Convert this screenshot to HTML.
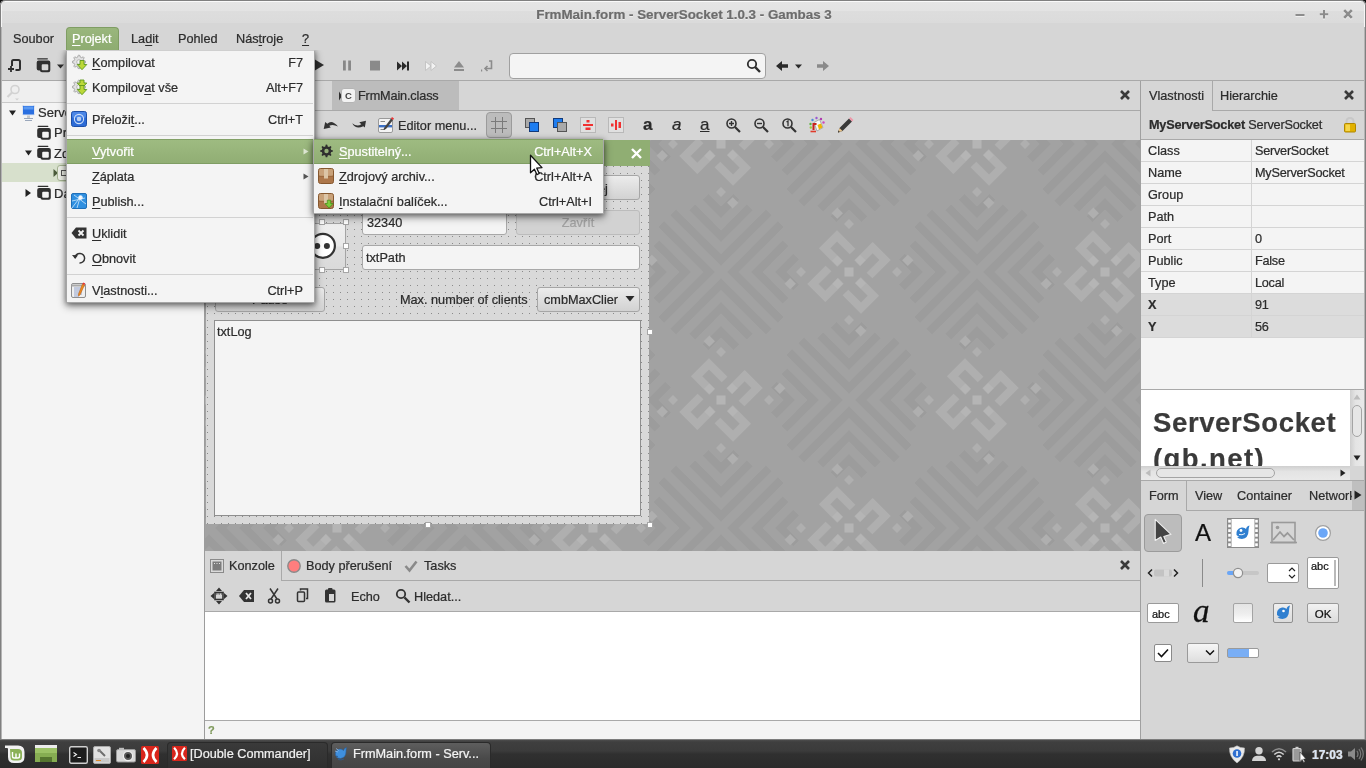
<!DOCTYPE html>
<html lang="cs"><head><meta charset="utf-8"><title>FrmMain.form - ServerSocket 1.0.3 - Gambas 3</title>
<style>
*{box-sizing:border-box;margin:0;padding:0}
html,body{width:1366px;height:768px;overflow:hidden;background:#d6d6d6}
body{position:relative;will-change:transform;font-family:"Liberation Sans",sans-serif;font-size:12.7px;color:#2c2c2c;line-height:16px;-webkit-text-stroke:.22px currentColor}
.a{position:absolute}
.t{position:absolute;white-space:nowrap;line-height:16px;height:16px;margin-top:1px}
.b{font-weight:bold}
u{text-decoration:underline;text-underline-offset:2px;text-decoration-thickness:1px}
svg{position:absolute;overflow:visible}
.ln{position:absolute;background:#a9a9a9}
.w{color:#fff}
.entry{position:absolute;background:#f4f4f4;border:1px solid #a8a8a8;border-radius:3px}
.btn{position:absolute;border:1px solid #a6a6a6;border-radius:3px;background:linear-gradient(#ececec,#dcdcdc 60%,#d2d2d2)}
.hd{position:absolute;width:6px;height:6px;background:#fff;border:1px solid #a6a6a6}
.sep{position:absolute;height:1px;background:#d2d2d2}
.mi{position:absolute;white-space:nowrap;line-height:16px;height:16px;margin-top:1px}
.sc{position:absolute;white-space:nowrap;line-height:16px;height:16px;text-align:right;margin-top:1px}
</style></head><body>
<!-- window frame -->
<div class="a" style="left:0;top:0;width:1366px;height:740px;background:#d6d6d6"></div>
<div class="a" style="left:0;top:0;width:1366px;height:27px;background:linear-gradient(#808080 0,#808080 1px,#fafafa 1px,#fafafa 2px,#e5e5e5 2px,#e3e3e3 11px,#dddddd 11px,#dbdbdb 23px,#d6d6d6 23px)"></div><div class="a" style="left:1px;top:4px;width:1px;height:23px;background:#f6f6f6"></div><div class="a" style="left:1364px;top:4px;width:1px;height:23px;background:#f6f6f6"></div>
<!-- corners -->
<svg style="left:0;top:0" width="6" height="6"><path d="M0 0H5A5 5 0 0 0 0 5Z" fill="#111"/><path d="M.5 5.500A5 5 0 0 1 5.500 .5" fill="none" stroke="#808080"/></svg>
<svg style="left:1360px;top:0" width="6" height="6"><path d="M6 0H1A5 5 0 0 1 6 5Z" fill="#111"/><path d="M5.500 5.500A5 5 0 0 0 .5 .5" fill="none" stroke="#808080"/></svg>
<div class="a" style="left:0;top:5px;width:1px;height:735px;background:#808080"></div><div class="a" style="left:1px;top:27px;width:1px;height:713px;background:#b4b4b4"></div>
<div class="a" style="left:1365px;top:5px;width:1px;height:735px;background:#808080"></div><div class="a" style="left:1364px;top:27px;width:1px;height:713px;background:#b4b4b4"></div>
<div class="t b" id="title" style="left:384px;width:600px;text-align:center;top:6px;color:#6c6c6c;font-size:13.36px;text-shadow:0 1px 0 rgba(255,255,255,.5)">FrmMain.form - ServerSocket 1.0.3 - Gambas 3</div>
<!-- window buttons -->
<svg style="left:1290px;top:5px" width="66" height="20" fill="none" stroke-width="2"><g stroke="#f0f0f0" transform="translate(0,1)"><path d="M5.500 10H14.500"/><path d="M29.800 9.200H38.200M34 5V13.400"/><path d="M54.200 5.200L61.800 12.800M61.800 5.200L54.200 12.800" stroke-width="2.600"/></g><g stroke="#8c8c8c"><path d="M5.500 10H14.500"/><path d="M29.800 9.200H38.200M34 5V13.400"/><path d="M54.200 5.200L61.800 12.800M61.800 5.200L54.200 12.800" stroke-width="2.600"/></g></svg>

<!-- menubar -->
<div class="t" style="left:13px;top:30px">Soubor</div>
<div class="a" style="left:66px;top:27px;width:53px;height:24px;background:linear-gradient(#9ab77d,#8dab70);border:1px solid #7f9d63;border-bottom:0;border-radius:4px 4px 0 0"></div>
<div class="t w" style="left:72px;top:30px"><u>P</u>rojekt</div>
<div class="t" style="left:131px;top:30px">La<u>d</u>it</div>
<div class="t" style="left:178px;top:30px">Pohled</div>
<div class="t" style="left:236px;top:30px">Nás<u>t</u>roje</div>
<div class="t" style="left:302px;top:30px"><u>?</u></div>

<!-- toolbar line -->
<div class="ln" style="left:2px;top:80px;width:1362px;height:1px"></div>

<!-- left panel -->
<div class="a" style="left:2px;top:81px;width:202px;height:659px;background:#f4f4f4"></div>
<div class="a" style="left:2px;top:81px;width:203px;height:21px;background:#efefef"></div>
<div class="ln" style="left:2px;top:102px;width:203px;height:1px;background:#c9c9c9"></div>
<div class="ln" style="left:204px;top:81px;width:1px;height:659px;background:#9c9c9c"></div>
<div class="a" style="left:2px;top:163px;width:203px;height:19px;background:#d7e0cc"></div>

<!-- center tab bar -->
<div class="a" style="left:332px;top:81px;width:127px;height:29px;background:#bcbcbc"></div>
<div class="ln" style="left:205px;top:110px;width:935px;height:1px"></div>
<!-- center form area bg placeholder -->
<div class="a" id="pat" style="left:205px;top:140px;width:935px;height:411px;background:#a2a2a2;overflow:hidden">
<svg style="left:0;top:0" width="935" height="411"><pattern id="bgp" width="256" height="256" patternUnits="userSpaceOnUse" patternTransform="translate(4,4)"><g transform="translate(128,0)"><path transform="rotate(45)" d="M-4.4 -4.4V-76H-12.5V-12.5H-76V-4.4Z" fill="#9c9c9c"/><path transform="rotate(45)" d="M-21.3 -21.3V-66H-29.4V-29.4H-66V-21.3Z" fill="#9c9c9c"/><path transform="rotate(45)" d="M-38.2 -38.2V-64H-46.3V-46.3H-64V-38.2Z" fill="#9c9c9c"/><path transform="rotate(135)" d="M-4.4 -4.4V-76H-12.5V-12.5H-76V-4.4Z" fill="#9c9c9c"/><path transform="rotate(135)" d="M-21.3 -21.3V-66H-29.4V-29.4H-66V-21.3Z" fill="#9c9c9c"/><path transform="rotate(135)" d="M-38.2 -38.2V-64H-46.3V-46.3H-64V-38.2Z" fill="#9c9c9c"/><path transform="rotate(225)" d="M-4.4 -4.4V-76H-12.5V-12.5H-76V-4.4Z" fill="#9c9c9c"/><path transform="rotate(225)" d="M-21.3 -21.3V-66H-29.4V-29.4H-66V-21.3Z" fill="#9c9c9c"/><path transform="rotate(225)" d="M-38.2 -38.2V-64H-46.3V-46.3H-64V-38.2Z" fill="#9c9c9c"/><path transform="rotate(315)" d="M-4.4 -4.4V-76H-12.5V-12.5H-76V-4.4Z" fill="#9c9c9c"/><path transform="rotate(315)" d="M-21.3 -21.3V-66H-29.4V-29.4H-66V-21.3Z" fill="#9c9c9c"/><path transform="rotate(315)" d="M-38.2 -38.2V-64H-46.3V-46.3H-64V-38.2Z" fill="#9c9c9c"/></g><g transform="translate(128,256)"><path transform="rotate(45)" d="M-4.4 -4.4V-76H-12.5V-12.5H-76V-4.4Z" fill="#9c9c9c"/><path transform="rotate(45)" d="M-21.3 -21.3V-66H-29.4V-29.4H-66V-21.3Z" fill="#9c9c9c"/><path transform="rotate(45)" d="M-38.2 -38.2V-64H-46.3V-46.3H-64V-38.2Z" fill="#9c9c9c"/><path transform="rotate(135)" d="M-4.4 -4.4V-76H-12.5V-12.5H-76V-4.4Z" fill="#9c9c9c"/><path transform="rotate(135)" d="M-21.3 -21.3V-66H-29.4V-29.4H-66V-21.3Z" fill="#9c9c9c"/><path transform="rotate(135)" d="M-38.2 -38.2V-64H-46.3V-46.3H-64V-38.2Z" fill="#9c9c9c"/><path transform="rotate(225)" d="M-4.4 -4.4V-76H-12.5V-12.5H-76V-4.4Z" fill="#9c9c9c"/><path transform="rotate(225)" d="M-21.3 -21.3V-66H-29.4V-29.4H-66V-21.3Z" fill="#9c9c9c"/><path transform="rotate(225)" d="M-38.2 -38.2V-64H-46.3V-46.3H-64V-38.2Z" fill="#9c9c9c"/><path transform="rotate(315)" d="M-4.4 -4.4V-76H-12.5V-12.5H-76V-4.4Z" fill="#9c9c9c"/><path transform="rotate(315)" d="M-21.3 -21.3V-66H-29.4V-29.4H-66V-21.3Z" fill="#9c9c9c"/><path transform="rotate(315)" d="M-38.2 -38.2V-64H-46.3V-46.3H-64V-38.2Z" fill="#9c9c9c"/></g><g transform="translate(0,128)"><path transform="rotate(45)" d="M-4.4 -4.4V-76H-12.5V-12.5H-76V-4.4Z" fill="#9c9c9c"/><path transform="rotate(45)" d="M-21.3 -21.3V-66H-29.4V-29.4H-66V-21.3Z" fill="#9c9c9c"/><path transform="rotate(45)" d="M-38.2 -38.2V-64H-46.3V-46.3H-64V-38.2Z" fill="#9c9c9c"/><path transform="rotate(135)" d="M-4.4 -4.4V-76H-12.5V-12.5H-76V-4.4Z" fill="#9c9c9c"/><path transform="rotate(135)" d="M-21.3 -21.3V-66H-29.4V-29.4H-66V-21.3Z" fill="#9c9c9c"/><path transform="rotate(135)" d="M-38.2 -38.2V-64H-46.3V-46.3H-64V-38.2Z" fill="#9c9c9c"/><path transform="rotate(225)" d="M-4.4 -4.4V-76H-12.5V-12.5H-76V-4.4Z" fill="#9c9c9c"/><path transform="rotate(225)" d="M-21.3 -21.3V-66H-29.4V-29.4H-66V-21.3Z" fill="#9c9c9c"/><path transform="rotate(225)" d="M-38.2 -38.2V-64H-46.3V-46.3H-64V-38.2Z" fill="#9c9c9c"/><path transform="rotate(315)" d="M-4.4 -4.4V-76H-12.5V-12.5H-76V-4.4Z" fill="#9c9c9c"/><path transform="rotate(315)" d="M-21.3 -21.3V-66H-29.4V-29.4H-66V-21.3Z" fill="#9c9c9c"/><path transform="rotate(315)" d="M-38.2 -38.2V-64H-46.3V-46.3H-64V-38.2Z" fill="#9c9c9c"/></g><g transform="translate(256,128)"><path transform="rotate(45)" d="M-4.4 -4.4V-76H-12.5V-12.5H-76V-4.4Z" fill="#9c9c9c"/><path transform="rotate(45)" d="M-21.3 -21.3V-66H-29.4V-29.4H-66V-21.3Z" fill="#9c9c9c"/><path transform="rotate(45)" d="M-38.2 -38.2V-64H-46.3V-46.3H-64V-38.2Z" fill="#9c9c9c"/><path transform="rotate(135)" d="M-4.4 -4.4V-76H-12.5V-12.5H-76V-4.4Z" fill="#9c9c9c"/><path transform="rotate(135)" d="M-21.3 -21.3V-66H-29.4V-29.4H-66V-21.3Z" fill="#9c9c9c"/><path transform="rotate(135)" d="M-38.2 -38.2V-64H-46.3V-46.3H-64V-38.2Z" fill="#9c9c9c"/><path transform="rotate(225)" d="M-4.4 -4.4V-76H-12.5V-12.5H-76V-4.4Z" fill="#9c9c9c"/><path transform="rotate(225)" d="M-21.3 -21.3V-66H-29.4V-29.4H-66V-21.3Z" fill="#9c9c9c"/><path transform="rotate(225)" d="M-38.2 -38.2V-64H-46.3V-46.3H-64V-38.2Z" fill="#9c9c9c"/><path transform="rotate(315)" d="M-4.4 -4.4V-76H-12.5V-12.5H-76V-4.4Z" fill="#9c9c9c"/><path transform="rotate(315)" d="M-21.3 -21.3V-66H-29.4V-29.4H-66V-21.3Z" fill="#9c9c9c"/><path transform="rotate(315)" d="M-38.2 -38.2V-64H-46.3V-46.3H-64V-38.2Z" fill="#9c9c9c"/></g><g transform="translate(0,0)"><path transform="rotate(45)" d="M-38 -21H-12V-13H-30V-3.500H-12V4.500H-38Z" fill="#afafaf"/><rect transform="rotate(45)" x="-20" y="-3.500" width="7.500" height="7.500" fill="#b5b5b5"/><rect transform="rotate(0) translate(0,-48) rotate(45)" x="-3.500" y="-3.500" width="7" height="7" fill="#afafaf"/><rect transform="rotate(0) translate(-11.700,-58.800) rotate(45)" x="-4" y="-4" width="8" height="8" fill="#afafaf"/><path transform="rotate(135)" d="M-38 -21H-12V-13H-30V-3.500H-12V4.500H-38Z" fill="#afafaf"/><rect transform="rotate(135)" x="-20" y="-3.500" width="7.500" height="7.500" fill="#b5b5b5"/><rect transform="rotate(90) translate(0,-48) rotate(45)" x="-3.500" y="-3.500" width="7" height="7" fill="#afafaf"/><rect transform="rotate(90) translate(-11.700,-58.800) rotate(45)" x="-4" y="-4" width="8" height="8" fill="#afafaf"/><path transform="rotate(225)" d="M-38 -21H-12V-13H-30V-3.500H-12V4.500H-38Z" fill="#afafaf"/><rect transform="rotate(225)" x="-20" y="-3.500" width="7.500" height="7.500" fill="#b5b5b5"/><rect transform="rotate(180) translate(0,-48) rotate(45)" x="-3.500" y="-3.500" width="7" height="7" fill="#afafaf"/><rect transform="rotate(180) translate(-11.700,-58.800) rotate(45)" x="-4" y="-4" width="8" height="8" fill="#afafaf"/><path transform="rotate(315)" d="M-38 -21H-12V-13H-30V-3.500H-12V4.500H-38Z" fill="#afafaf"/><rect transform="rotate(315)" x="-20" y="-3.500" width="7.500" height="7.500" fill="#b5b5b5"/><rect transform="rotate(270) translate(0,-48) rotate(45)" x="-3.500" y="-3.500" width="7" height="7" fill="#afafaf"/><rect transform="rotate(270) translate(-11.700,-58.800) rotate(45)" x="-4" y="-4" width="8" height="8" fill="#afafaf"/><rect x="-4.500" y="-4.500" width="9" height="9" fill="#b5b5b5"/></g><g transform="translate(256,0)"><path transform="rotate(45)" d="M-38 -21H-12V-13H-30V-3.500H-12V4.500H-38Z" fill="#afafaf"/><rect transform="rotate(45)" x="-20" y="-3.500" width="7.500" height="7.500" fill="#b5b5b5"/><rect transform="rotate(0) translate(0,-48) rotate(45)" x="-3.500" y="-3.500" width="7" height="7" fill="#afafaf"/><rect transform="rotate(0) translate(-11.700,-58.800) rotate(45)" x="-4" y="-4" width="8" height="8" fill="#afafaf"/><path transform="rotate(135)" d="M-38 -21H-12V-13H-30V-3.500H-12V4.500H-38Z" fill="#afafaf"/><rect transform="rotate(135)" x="-20" y="-3.500" width="7.500" height="7.500" fill="#b5b5b5"/><rect transform="rotate(90) translate(0,-48) rotate(45)" x="-3.500" y="-3.500" width="7" height="7" fill="#afafaf"/><rect transform="rotate(90) translate(-11.700,-58.800) rotate(45)" x="-4" y="-4" width="8" height="8" fill="#afafaf"/><path transform="rotate(225)" d="M-38 -21H-12V-13H-30V-3.500H-12V4.500H-38Z" fill="#afafaf"/><rect transform="rotate(225)" x="-20" y="-3.500" width="7.500" height="7.500" fill="#b5b5b5"/><rect transform="rotate(180) translate(0,-48) rotate(45)" x="-3.500" y="-3.500" width="7" height="7" fill="#afafaf"/><rect transform="rotate(180) translate(-11.700,-58.800) rotate(45)" x="-4" y="-4" width="8" height="8" fill="#afafaf"/><path transform="rotate(315)" d="M-38 -21H-12V-13H-30V-3.500H-12V4.500H-38Z" fill="#afafaf"/><rect transform="rotate(315)" x="-20" y="-3.500" width="7.500" height="7.500" fill="#b5b5b5"/><rect transform="rotate(270) translate(0,-48) rotate(45)" x="-3.500" y="-3.500" width="7" height="7" fill="#afafaf"/><rect transform="rotate(270) translate(-11.700,-58.800) rotate(45)" x="-4" y="-4" width="8" height="8" fill="#afafaf"/><rect x="-4.500" y="-4.500" width="9" height="9" fill="#b5b5b5"/></g><g transform="translate(0,256)"><path transform="rotate(45)" d="M-38 -21H-12V-13H-30V-3.500H-12V4.500H-38Z" fill="#afafaf"/><rect transform="rotate(45)" x="-20" y="-3.500" width="7.500" height="7.500" fill="#b5b5b5"/><rect transform="rotate(0) translate(0,-48) rotate(45)" x="-3.500" y="-3.500" width="7" height="7" fill="#afafaf"/><rect transform="rotate(0) translate(-11.700,-58.800) rotate(45)" x="-4" y="-4" width="8" height="8" fill="#afafaf"/><path transform="rotate(135)" d="M-38 -21H-12V-13H-30V-3.500H-12V4.500H-38Z" fill="#afafaf"/><rect transform="rotate(135)" x="-20" y="-3.500" width="7.500" height="7.500" fill="#b5b5b5"/><rect transform="rotate(90) translate(0,-48) rotate(45)" x="-3.500" y="-3.500" width="7" height="7" fill="#afafaf"/><rect transform="rotate(90) translate(-11.700,-58.800) rotate(45)" x="-4" y="-4" width="8" height="8" fill="#afafaf"/><path transform="rotate(225)" d="M-38 -21H-12V-13H-30V-3.500H-12V4.500H-38Z" fill="#afafaf"/><rect transform="rotate(225)" x="-20" y="-3.500" width="7.500" height="7.500" fill="#b5b5b5"/><rect transform="rotate(180) translate(0,-48) rotate(45)" x="-3.500" y="-3.500" width="7" height="7" fill="#afafaf"/><rect transform="rotate(180) translate(-11.700,-58.800) rotate(45)" x="-4" y="-4" width="8" height="8" fill="#afafaf"/><path transform="rotate(315)" d="M-38 -21H-12V-13H-30V-3.500H-12V4.500H-38Z" fill="#afafaf"/><rect transform="rotate(315)" x="-20" y="-3.500" width="7.500" height="7.500" fill="#b5b5b5"/><rect transform="rotate(270) translate(0,-48) rotate(45)" x="-3.500" y="-3.500" width="7" height="7" fill="#afafaf"/><rect transform="rotate(270) translate(-11.700,-58.800) rotate(45)" x="-4" y="-4" width="8" height="8" fill="#afafaf"/><rect x="-4.500" y="-4.500" width="9" height="9" fill="#b5b5b5"/></g><g transform="translate(256,256)"><path transform="rotate(45)" d="M-38 -21H-12V-13H-30V-3.500H-12V4.500H-38Z" fill="#afafaf"/><rect transform="rotate(45)" x="-20" y="-3.500" width="7.500" height="7.500" fill="#b5b5b5"/><rect transform="rotate(0) translate(0,-48) rotate(45)" x="-3.500" y="-3.500" width="7" height="7" fill="#afafaf"/><rect transform="rotate(0) translate(-11.700,-58.800) rotate(45)" x="-4" y="-4" width="8" height="8" fill="#afafaf"/><path transform="rotate(135)" d="M-38 -21H-12V-13H-30V-3.500H-12V4.500H-38Z" fill="#afafaf"/><rect transform="rotate(135)" x="-20" y="-3.500" width="7.500" height="7.500" fill="#b5b5b5"/><rect transform="rotate(90) translate(0,-48) rotate(45)" x="-3.500" y="-3.500" width="7" height="7" fill="#afafaf"/><rect transform="rotate(90) translate(-11.700,-58.800) rotate(45)" x="-4" y="-4" width="8" height="8" fill="#afafaf"/><path transform="rotate(225)" d="M-38 -21H-12V-13H-30V-3.500H-12V4.500H-38Z" fill="#afafaf"/><rect transform="rotate(225)" x="-20" y="-3.500" width="7.500" height="7.500" fill="#b5b5b5"/><rect transform="rotate(180) translate(0,-48) rotate(45)" x="-3.500" y="-3.500" width="7" height="7" fill="#afafaf"/><rect transform="rotate(180) translate(-11.700,-58.800) rotate(45)" x="-4" y="-4" width="8" height="8" fill="#afafaf"/><path transform="rotate(315)" d="M-38 -21H-12V-13H-30V-3.500H-12V4.500H-38Z" fill="#afafaf"/><rect transform="rotate(315)" x="-20" y="-3.500" width="7.500" height="7.500" fill="#b5b5b5"/><rect transform="rotate(270) translate(0,-48) rotate(45)" x="-3.500" y="-3.500" width="7" height="7" fill="#afafaf"/><rect transform="rotate(270) translate(-11.700,-58.800) rotate(45)" x="-4" y="-4" width="8" height="8" fill="#afafaf"/><rect x="-4.500" y="-4.500" width="9" height="9" fill="#b5b5b5"/></g><g transform="translate(128,128)"><path transform="rotate(45)" d="M-38 -21H-12V-13H-30V-3.500H-12V4.500H-38Z" fill="#afafaf"/><rect transform="rotate(45)" x="-20" y="-3.500" width="7.500" height="7.500" fill="#b5b5b5"/><rect transform="rotate(0) translate(0,-48) rotate(45)" x="-3.500" y="-3.500" width="7" height="7" fill="#afafaf"/><rect transform="rotate(0) translate(-11.700,-58.800) rotate(45)" x="-4" y="-4" width="8" height="8" fill="#afafaf"/><path transform="rotate(135)" d="M-38 -21H-12V-13H-30V-3.500H-12V4.500H-38Z" fill="#afafaf"/><rect transform="rotate(135)" x="-20" y="-3.500" width="7.500" height="7.500" fill="#b5b5b5"/><rect transform="rotate(90) translate(0,-48) rotate(45)" x="-3.500" y="-3.500" width="7" height="7" fill="#afafaf"/><rect transform="rotate(90) translate(-11.700,-58.800) rotate(45)" x="-4" y="-4" width="8" height="8" fill="#afafaf"/><path transform="rotate(225)" d="M-38 -21H-12V-13H-30V-3.500H-12V4.500H-38Z" fill="#afafaf"/><rect transform="rotate(225)" x="-20" y="-3.500" width="7.500" height="7.500" fill="#b5b5b5"/><rect transform="rotate(180) translate(0,-48) rotate(45)" x="-3.500" y="-3.500" width="7" height="7" fill="#afafaf"/><rect transform="rotate(180) translate(-11.700,-58.800) rotate(45)" x="-4" y="-4" width="8" height="8" fill="#afafaf"/><path transform="rotate(315)" d="M-38 -21H-12V-13H-30V-3.500H-12V4.500H-38Z" fill="#afafaf"/><rect transform="rotate(315)" x="-20" y="-3.500" width="7.500" height="7.500" fill="#b5b5b5"/><rect transform="rotate(270) translate(0,-48) rotate(45)" x="-3.500" y="-3.500" width="7" height="7" fill="#afafaf"/><rect transform="rotate(270) translate(-11.700,-58.800) rotate(45)" x="-4" y="-4" width="8" height="8" fill="#afafaf"/><rect x="-4.500" y="-4.500" width="9" height="9" fill="#b5b5b5"/></g></pattern><rect width="935" height="411" fill="url(#bgp)"/></svg>
</div>

<!-- right panel -->
<div class="ln" style="left:1140px;top:81px;width:1px;height:659px;background:#a0a0a0"></div>
<!-- main toolbar -->
<svg style="left:7px;top:58px" width="16" height="16" fill="none" stroke="#2e2e2e" stroke-width="2"><path d="M5 8V3.500Q5 2 6.500 2H11.500Q13 2 13 3.500V10.500Q13 12 11.500 12H8.500"/><path d="M1 11H7M4 8V14" stroke-width="1.800"/></svg>
<svg style="left:36px;top:58px" width="30" height="16"><g transform="translate(.5,-.5)"><path d="M1.200 1.300H10.800" fill="none" stroke="#2e2e2e" stroke-width="1.300" stroke-linecap="round"/><path fill-rule="evenodd" fill="#303030" d="M2.200 3H11.800Q13.800 3 13.800 5V12.700Q13.800 14.700 11.800 14.700H5.500Q3.500 14.700 3.500 13H2.200Q.2 13 .2 11V5Q.2 3 2.200 3ZM6.200 6.700H10.800Q11.800 6.700 11.800 7.700V11.700Q11.800 12.700 10.800 12.700H6.200Q5.200 12.700 5.200 11.700V7.700Q5.200 6.700 6.200 6.700Z"/></g><path d="M21 6.500H28L24.500 10.500Z" fill="#2e2e2e"/></svg>
<svg style="left:312px;top:58px" width="14" height="14"><path d="M2 1V13L12 7Z" fill="#2e2e2e"/></svg>
<svg style="left:341px;top:59px" width="12" height="13"><rect x="2" y="1.500" width="2.800" height="10" fill="#888"/><rect x="7.200" y="1.500" width="2.800" height="10" fill="#888"/></svg>
<svg style="left:369px;top:59px" width="12" height="13"><rect x="1" y="1.700" width="10" height="9.800" fill="#8a8a8a"/></svg>
<svg style="left:396px;top:60px" width="14" height="12" fill="#2a2a2a"><path d="M1 1.500L6 6L1 10.500ZM6 1.500L11 6L6 10.500Z"/><rect x="11" y="1.500" width="2" height="9"/></svg>
<svg style="left:424px;top:60px" width="14" height="12" fill="#f2f2f2" stroke="#bdbdbd" stroke-width=".8"><path d="M1.500 1.500L7 6L1.500 10.500ZM7 1.500L12.500 6L7 10.500Z"/></svg>
<svg style="left:453px;top:60px" width="12" height="12" fill="#8c8c8c"><path d="M6 1L11 7.500H1Z"/><rect x="1" y="9" width="10" height="2"/></svg>
<svg style="left:479px;top:59px" width="16" height="14" fill="none" stroke="#8c8c8c" stroke-width="1.600"><path d="M10 2H12.500V9.500H6"/><path d="M8.500 7L6 9.500L8.500 12"/><path d="M2 11.500H3.200" stroke-width="2"/></svg>
<div class="entry" style="left:509px;top:53px;width:257px;height:26px;border-color:#a0a0a0;border-radius:4px"></div>
<svg style="left:746px;top:58px" width="16" height="16" fill="none" stroke="#2e2e2e"><circle cx="6" cy="6" r="4.200" stroke-width="1.800"/><path d="M9.200 9.200L14 14" stroke-width="2.400"/></svg>
<svg style="left:775px;top:60px" width="30" height="12" fill="#2a2a2a"><path d="M1 6L7 1V4.200H13V7.800H7V11Z"/><path d="M20 4.500H27L23.500 8.500Z"/></svg>
<svg style="left:816px;top:60px" width="14" height="12" fill="#8a8a8a"><path d="M13 6L7 1V4.200H1V7.800H7V11Z"/></svg>

<!-- left search + tree -->
<svg style="left:6px;top:83px" width="16" height="18" fill="none" stroke="#d2d2d2"><circle cx="9" cy="6.500" r="4" stroke-width="1.600"/><path d="M6 9.500L1.500 14" stroke-width="2.200"/><path d="M9 15.500H13L11 17.500Z" fill="#d2d2d2" stroke="none"/></svg>
<svg style="left:9px;top:110px" width="7" height="6"><path d="M0 .5H7L3.500 5.500Z" fill="#222"/></svg>
<svg style="left:21px;top:104px" width="15" height="18"><rect x="1.500" y="1.500" width="12" height="9.500" rx="1" fill="#2a6fe0" stroke="#dfe6f2"/><rect x="2.500" y="2.500" width="10" height="3" fill="#5b9af2"/><path d="M6 11.500H9V14H6Z" fill="#c9c9c9"/><path d="M3 14.500H12M4 16.500H11" stroke="#9aa7bb"/></svg>
<div class="t" style="left:38px;top:104px;font-size:13px">Serve</div>
<svg style="left:37px;top:125px" width="15" height="16"><path d="M1.200 1.300H10.800" fill="none" stroke="#2e2e2e" stroke-width="1.300" stroke-linecap="round"/><path fill-rule="evenodd" fill="#303030" d="M2.200 3H11.800Q13.800 3 13.800 5V12.700Q13.800 14.700 11.800 14.700H5.500Q3.500 14.700 3.500 13H2.200Q.2 13 .2 11V5Q.2 3 2.200 3ZM6.200 6.700H10.800Q11.800 6.700 11.800 7.700V11.700Q11.800 12.700 10.800 12.700H6.200Q5.200 12.700 5.200 11.700V7.700Q5.200 6.700 6.200 6.700Z"/></svg>
<div class="t" style="left:54px;top:124px;font-size:13px">Pr</div>
<svg style="left:25px;top:150px" width="7" height="6"><path d="M0 .5H7L3.500 5.500Z" fill="#222"/></svg>
<svg style="left:37px;top:145px" width="15" height="16"><path d="M1.200 1.300H10.800" fill="none" stroke="#2e2e2e" stroke-width="1.300" stroke-linecap="round"/><path fill-rule="evenodd" fill="#303030" d="M2.200 3H11.800Q13.800 3 13.800 5V12.700Q13.800 14.700 11.800 14.700H5.500Q3.500 14.700 3.500 13H2.200Q.2 13 .2 11V5Q.2 3 2.200 3ZM6.200 6.700H10.800Q11.800 6.700 11.800 7.700V11.700Q11.800 12.700 10.800 12.700H6.200Q5.200 12.700 5.200 11.700V7.700Q5.200 6.700 6.200 6.700Z"/></svg>
<div class="t" style="left:54px;top:145px;font-size:13px">Zd</div>
<svg style="left:53px;top:169px" width="5" height="8"><path d="M.5 0V8L5 4Z" fill="#4a5a3a"/></svg>
<div class="a" style="left:57px;top:165px;width:14px;height:16px;background:#eceee6;border:1px solid #a5b392;border-radius:3px"></div>
<div class="a" style="left:61px;top:170px;width:8px;height:6px;border:1px solid #555"></div>
<svg style="left:25px;top:189px" width="6" height="8"><path d="M.5 0V8L6 4Z" fill="#222"/></svg>
<svg style="left:37px;top:185px" width="15" height="16"><path d="M1.200 1.300H10.800" fill="none" stroke="#2e2e2e" stroke-width="1.300" stroke-linecap="round"/><path fill-rule="evenodd" fill="#303030" d="M2.200 3H11.800Q13.800 3 13.800 5V12.700Q13.800 14.700 11.800 14.700H5.500Q3.500 14.700 3.500 13H2.200Q.2 13 .2 11V5Q.2 3 2.200 3ZM6.200 6.700H10.800Q11.800 6.700 11.800 7.700V11.700Q11.800 12.700 10.800 12.700H6.200Q5.200 12.700 5.200 11.700V7.700Q5.200 6.700 6.200 6.700Z"/></svg>
<div class="t" style="left:54px;top:185px;font-size:13px">Da</div>
<!-- center tab -->
<svg style="left:338px;top:86px" width="20" height="20"><path d="M1 5.5V14.5L4 10Z" fill="#2e2e2e"/><rect x="3.5" y="2.5" width="14" height="14" rx="2.5" fill="#f2f2f2" stroke="#b4b4b4"/><text x="10.5" y="13.2" font-family="Liberation Sans,sans-serif" font-size="9.5" font-weight="bold" fill="#444" text-anchor="middle">C</text></svg>
<div class="t" style="left:358px;top:87px;letter-spacing:-.15px">FrmMain.class</div>
<svg style="left:1119px;top:89px" width="12" height="12"><path d="M2 2L10 10M10 2L2 10" stroke="#3a3a3a" stroke-width="2.6" fill="none"/></svg>

<!-- editor toolbar -->
<svg style="left:322px;top:117px" width="48" height="16" fill="#333"><path d="M1.700 11.900L3.200 5L5.300 6.700Q10 2.300 16 9.600Q11 6.800 7.300 8.800L8.800 10.500Z"/><path d="M44 3.800L37.300 5.200L39.300 7.200Q35 10 30.200 6.200Q34 13 41.300 9.200L42.800 10.600Z"/></svg>
<svg style="left:377px;top:116px" width="18" height="18"><rect x="1.5" y="2.5" width="14" height="14" rx="1.5" fill="#f4f4f4" stroke="#9a9a9a"/><rect x="2" y="9" width="13" height="2.4" fill="#3b6fc4"/><path d="M3.5 5.5H8M3.5 13.5H8" stroke="#888"/><path d="M7 12L14 2.5L16 4L9 13L6.5 14Z" fill="#444"/><path d="M14 2.5L15 1L17 2.5L16 4Z" fill="#e33"/></svg>
<div class="t" style="left:398px;top:117px">Editor menu...</div>
<div class="a" style="left:486px;top:112px;width:26px;height:26px;background:#bcbcbc;border:1px solid #9b9b9b;border-radius:4px"></div>
<svg style="left:490px;top:116px" width="18" height="18" stroke="#7a7a7a" fill="none"><path d="M5.5 1V17M12.5 1V17M1 5.5H17M1 12.5H17"/></svg>
<svg style="left:524px;top:117px" width="16" height="16"><rect x="1.5" y="1.5" width="9" height="9" fill="#a9a9a9" stroke="#555"/><rect x="5.5" y="5.5" width="9" height="9" fill="#1e7df0" stroke="#123a7a"/></svg>
<svg style="left:552px;top:117px" width="16" height="16"><rect x="1.5" y="1.5" width="9" height="9" fill="#1e7df0" stroke="#123a7a"/><rect x="5.5" y="5.5" width="9" height="9" fill="#a9a9a9" stroke="#555"/></svg>
<svg style="left:580px;top:117px" width="16" height="16"><rect x=".5" y=".5" width="15" height="15" fill="#e0e0e0" stroke="#b9b9b9"/><path d="M3 8H13" stroke="#f03030" stroke-width="2"/><rect x="6.5" y="3" width="3" height="2.5" fill="#f03030"/><rect x="5.5" y="10.5" width="5" height="2.5" fill="#f03030"/></svg>
<svg style="left:608px;top:117px" width="16" height="16"><rect x=".5" y=".5" width="15" height="15" fill="#e0e0e0" stroke="#b9b9b9"/><path d="M8 3V13" stroke="#f03030" stroke-width="2"/><rect x="3" y="6.5" width="2.5" height="3" fill="#f03030"/><rect x="10.5" y="5" width="2.5" height="6" fill="#f03030"/></svg>
<div class="t b" style="left:643px;top:115px;font-size:17px;color:#2a2a2a;line-height:18px;height:18px">a</div>
<div class="t" style="left:672px;top:115px;font-size:17px;color:#2a2a2a;font-style:italic;line-height:18px;height:18px">a</div>
<div class="t" style="left:700px;top:115px;font-size:17px;color:#2a2a2a;line-height:18px;height:18px;text-decoration:underline">a</div>
<svg style="left:725px;top:117px" width="16" height="16" fill="none" stroke="#333"><circle cx="6.5" cy="6.5" r="4.5" stroke-width="1.6"/><path d="M10 10L15 15" stroke-width="2.2"/><path d="M4 6.5H9M6.5 4V9" stroke-width="1.4"/></svg>
<svg style="left:753px;top:117px" width="16" height="16" fill="none" stroke="#333"><circle cx="6.5" cy="6.5" r="4.5" stroke-width="1.6"/><path d="M10 10L15 15" stroke-width="2.2"/><path d="M4 6.5H9" stroke-width="1.4"/></svg>
<svg style="left:781px;top:117px" width="16" height="16" fill="none" stroke="#333"><circle cx="6.5" cy="6.5" r="4.5" stroke-width="1.6"/><path d="M10 10L15 15" stroke-width="2.2"/><path d="M5.5 5L7 4V9.2" stroke-width="1.3"/></svg>
<svg style="left:808px;top:116px" width="18" height="18"><circle cx="4.500" cy="4" r="1.200" fill="#4a8ad8"/><circle cx="8.500" cy="2" r="1.200" fill="#9a5ad0"/><circle cx="13" cy="3" r="1.200" fill="#b03ab0"/><circle cx="15.500" cy="6.500" r="1.200" fill="#d048c0"/><circle cx="2.500" cy="8" r="1.200" fill="#5ab040"/><circle cx="2.800" cy="11.500" r="1.200" fill="#a0c840"/><path d="M6 6.500L11.500 3.500L15 11.500L9 15Z" fill="#f7f7f7" stroke="#9a9a9a" stroke-width=".8"/><path d="M9.500 9L13 7.500L14.500 11.500L11 13.500Z" fill="#f0b400"/><path d="M4.500 7H8.500V9H6.500V14H4.500Z" fill="#c8201c"/><path d="M2.500 15.500H8" stroke="#e03a2a" stroke-width="1.600"/></svg>
<svg style="left:836px;top:116px" width="18" height="18"><path d="M2 16.5L3.5 12L13 2.5L16 5.5L6.5 15Z" fill="#3a3a3a"/><path d="M13 2.5L14.5 1L17.5 4L16 5.5Z" fill="#e9a"/><path d="M2 16.5L3.5 12L6.5 15Z" fill="#e8c38a"/><path d="M2 16.5L2.6 14.6L3.9 15.9Z" fill="#222"/></svg>

<!-- form window -->
<div class="a" style="left:206px;top:140px;width:443px;height:384px;background:#d9d9d9"></div>
<svg style="left:206px;top:166px" width="443" height="358"><pattern id="dots" width="7" height="7" patternUnits="userSpaceOnUse"><rect x="1" y="0" width="1" height="1" fill="#8a8a8a"/></pattern><rect width="443" height="358" fill="url(#dots)"/></svg>
<div class="a" style="left:206px;top:140px;width:444px;height:26px;background:#90ae73"></div>
<svg style="left:630px;top:147px" width="13" height="13"><path d="M2 2L11 11M11 2L2 11" stroke="#fff" stroke-width="2.4" fill="none"/></svg>
<!-- row1 button -->
<div class="btn" style="left:520px;top:175px;width:120px;height:25px"></div>
<div class="t" style="left:598px;top:180px">ej</div>
<!-- row2 -->
<div class="entry" style="left:362px;top:210px;width:145px;height:25px"></div>
<div class="t" style="left:367px;top:214px">32340</div>
<div class="btn" style="left:516px;top:210px;width:124px;height:25px;background:#d2d2d2;border-color:#bcbcbc"></div>
<div class="t" style="left:516px;width:124px;text-align:center;top:214px;color:#a2a2a2">Zavřít</div>
<!-- socket control -->
<div class="a" style="left:298px;top:223px;width:48px;height:47px;background:linear-gradient(#efefef 0,#e9e9e9 49%,#dfdfdf 51%,#dadada 100%);border:1px solid #a4a4a4;border-left:0"></div>
<svg style="left:298px;top:222px" width="50" height="50"><circle cx="24.900" cy="23.800" r="12" fill="#fff" stroke="#333" stroke-width="2.200"/><circle cx="19.200" cy="24" r="3" fill="#333"/><circle cx="28.900" cy="24" r="3" fill="#333"/></svg>
<div class="hd" style="left:319px;top:219px"></div><div class="hd" style="left:343px;top:219px"></div>
<div class="hd" style="left:343px;top:243px"></div>
<div class="hd" style="left:319px;top:267px"></div><div class="hd" style="left:343px;top:267px"></div>
<!-- row3 -->
<div class="entry" style="left:362px;top:245px;width:278px;height:25px"></div>
<div class="t" style="left:366px;top:249px">txtPath</div>
<!-- row4 -->
<div class="btn" style="left:215px;top:287px;width:110px;height:25px"></div>
<div class="t" style="left:215px;width:110px;text-align:center;top:291px">Pause</div>
<div class="t" style="left:400px;top:291px">Max. number of clients</div>
<div class="btn" style="left:537px;top:287px;width:103px;height:25px"></div>
<div class="t" style="left:544px;top:291px">cmbMaxClier</div>
<svg style="left:625px;top:295px" width="10" height="8"><path d="M.5 1H9.5L5 6.5Z" fill="#2a2a2a"/></svg>
<!-- txtLog -->
<div class="a" style="left:214px;top:320px;width:427px;height:196px;background:#f4f4f4;border:1px solid #8e8e8e"></div>
<div class="t" style="left:217px;top:323px">txtLog</div>
<div class="hd" style="left:647px;top:329px"></div>
<div class="hd" style="left:425px;top:522px"></div>
<div class="hd" style="left:647px;top:522px"></div>

<!-- bottom panel -->
<div class="a" style="left:205px;top:551px;width:935px;height:189px;background:#d6d6d6"></div>
<div class="ln" style="left:281px;top:580px;width:859px;height:1px"></div>
<div class="ln" style="left:281px;top:551px;width:1px;height:30px"></div>
<svg style="left:210px;top:559px" width="14" height="14"><rect x=".5" y=".5" width="13" height="13" fill="#dadada" stroke="#8a8a8a"/><rect x="2.500" y="2.500" width="9" height="9" fill="#7c7c7c"/><path d="M4 4.500H5M6.500 4.500H7.500M9 4.500H10" stroke="#e4e4e4"/></svg>
<div class="t" style="left:229px;top:557px">Konzole</div>
<svg style="left:286px;top:558px" width="16" height="16"><circle cx="8" cy="8" r="6.2" fill="#ff7e7e" stroke="#8a8a8a" stroke-width="1.4"/></svg>
<div class="t" style="left:306px;top:557px">Body přerušení</div>
<svg style="left:404px;top:559px" width="14" height="14"><path d="M1.5 7L5.5 11.5L12.5 2.5" stroke="#8a8a8a" stroke-width="2.6" fill="none"/></svg>
<div class="t" style="left:424px;top:557px">Tasks</div>
<svg style="left:1119px;top:559px" width="12" height="12"><path d="M2 2L10 10M10 2L2 10" stroke="#3a3a3a" stroke-width="2.6" fill="none"/></svg>
<!-- console toolbar -->
<svg style="left:210px;top:587px" width="18" height="18" fill="#333"><path d="M9 0.5L12 4H6ZM9 17.5L6 14H12ZM0.5 9L4 6V12ZM17.5 9L14 12V6Z"/><rect x="5" y="5.5" width="8" height="7" fill="none" stroke="#333" stroke-width="1.6"/><path d="M6 7H7.5M8.5 7H10M11 7H12" stroke="#333" stroke-width=".8"/></svg>
<svg style="left:238px;top:588px" width="18" height="16"><path d="M1 8L6 2H16V14H6Z" fill="#333"/><path d="M8 5L13 11M13 5L8 11" stroke="#e6e6e6" stroke-width="1.8"/></svg>
<svg style="left:266px;top:587px" width="16" height="18" fill="none" stroke="#333" stroke-width="1.5"><path d="M4 1.5L11 12M12 1.5L5 12"/><circle cx="4.5" cy="14" r="2"/><circle cx="11.500" cy="14" r="2"/></svg>
<svg style="left:295px;top:587px" width="16" height="18" fill="none" stroke="#333" stroke-width="1.5"><path d="M5.500 3.500V2H12.500V11.500H11"/><rect x="2.500" y="5" width="7" height="9.500" rx="1"/></svg>
<svg style="left:323px;top:587px" width="16" height="18"><rect x="2" y="2.500" width="10.500" height="13" rx="1.500" fill="#333"/><rect x="5" y="1" width="4.500" height="3" rx="1" fill="#333"/><rect x="5.500" y="6.500" width="6" height="8" fill="#d6d6d6" stroke="#333"/></svg>
<div class="t" style="left:351px;top:588px">Echo</div>
<svg style="left:395px;top:588px" width="16" height="16" fill="none" stroke="#333"><circle cx="6" cy="6" r="4.200" stroke-width="1.800"/><path d="M9.500 9.500L14.500 14.500" stroke-width="2.400"/></svg>
<div class="t" style="left:414px;top:588px">Hledat...</div>
<div class="ln" style="left:205px;top:611px;width:935px;height:1px"></div>
<div class="a" style="left:205px;top:612px;width:935px;height:108px;background:#fff"></div>
<div class="ln" style="left:205px;top:720px;width:935px;height:1px"></div>
<div class="a" style="left:205px;top:721px;width:935px;height:18px;background:#f4f4f4"></div>
<div class="t b" style="left:208px;top:721px;color:#7f9a5c;font-size:11px">?</div>
<div class="ln" style="left:205px;top:739px;width:935px;height:1px;background:#bdbdbd"></div>
<!-- right panel -->
<div class="ln" style="left:1212px;top:81px;width:1px;height:29px"></div>
<div class="ln" style="left:1212px;top:110px;width:152px;height:1px"></div>
<div class="t" style="left:1149px;top:87px">Vlastnosti</div>
<div class="t" style="left:1220px;top:87px">Hierarchie</div>
<svg style="left:1343px;top:89px" width="12" height="12"><path d="M2 2L10 10M10 2L2 10" stroke="#3a3a3a" stroke-width="2.6" fill="none"/></svg>
<div class="t" style="left:1149px;top:116px;letter-spacing:-.2px"><b>MyServerSocket</b> ServerSocket</div>
<svg style="left:1343px;top:116px" width="14" height="17"><path d="M3.500 8V5.500Q3.500 2 7 2Q10.500 2 10.500 5.500V8" fill="none" stroke="#c8c8c8" stroke-width="2"/><rect x="1.500" y="7.500" width="11" height="8.500" rx="1" fill="#e2b100" stroke="#b08800"/><rect x="2.500" y="8.500" width="4.500" height="6.500" fill="#f5d64a"/></svg>
<div class="ln" style="left:1141px;top:139px;width:223px;height:1px"></div>
<div class="a" style="left:1141px;top:140px;width:223px;height:249px;background:#f4f4f4"></div>
<div class="ln" style="left:1141px;top:161px;width:223px;height:1px;background:#d4d4d4"></div>
<div class="t" style="left:1148px;top:142px">Class</div>
<div class="t" style="letter-spacing:-.25px;left:1255px;top:142px">ServerSocket</div>
<div class="ln" style="left:1141px;top:183px;width:223px;height:1px;background:#d4d4d4"></div>
<div class="t" style="left:1148px;top:164px">Name</div>
<div class="t" style="letter-spacing:-.25px;left:1255px;top:164px">MyServerSocket</div>
<div class="ln" style="left:1141px;top:205px;width:223px;height:1px;background:#d4d4d4"></div>
<div class="t" style="left:1148px;top:186px">Group</div>
<div class="ln" style="left:1141px;top:227px;width:223px;height:1px;background:#d4d4d4"></div>
<div class="t" style="left:1148px;top:208px">Path</div>
<div class="ln" style="left:1141px;top:249px;width:223px;height:1px;background:#d4d4d4"></div>
<div class="t" style="left:1148px;top:230px">Port</div>
<div class="t" style="letter-spacing:-.25px;left:1255px;top:230px">0</div>
<div class="ln" style="left:1141px;top:271px;width:223px;height:1px;background:#d4d4d4"></div>
<div class="t" style="left:1148px;top:252px">Public</div>
<div class="t" style="letter-spacing:-.25px;left:1255px;top:252px">False</div>
<div class="ln" style="left:1141px;top:293px;width:223px;height:1px;background:#d4d4d4"></div>
<div class="t" style="left:1148px;top:274px">Type</div>
<div class="t" style="letter-spacing:-.25px;left:1255px;top:274px">Local</div>
<div class="a" style="left:1141px;top:294px;width:223px;height:22px;background:#dcdcdc"></div>
<div class="ln" style="left:1141px;top:315px;width:223px;height:1px;background:#d4d4d4"></div>
<div class="t b" style="left:1148px;top:296px">X</div>
<div class="t" style="letter-spacing:-.25px;left:1255px;top:296px">91</div>
<div class="a" style="left:1141px;top:316px;width:223px;height:22px;background:#dcdcdc"></div>
<div class="ln" style="left:1141px;top:337px;width:223px;height:1px;background:#d4d4d4"></div>
<div class="t b" style="left:1148px;top:318px">Y</div>
<div class="t" style="letter-spacing:-.25px;left:1255px;top:318px">56</div>
<div class="ln" style="left:1251px;top:140px;width:1px;height:198px;background:#d4d4d4"></div>
<div class="ln" style="left:1141px;top:389px;width:223px;height:1px"></div>
<div class="a" style="left:1141px;top:390px;width:209px;height:76px;background:#fff;overflow:hidden"><div class="t b" style="left:12px;top:14px;font-size:27.5px;line-height:35px;height:35px;color:#3a3a3a;letter-spacing:.62px">ServerSocket</div><div class="t b" style="left:12px;top:50px;font-size:27.5px;line-height:35px;height:35px;color:#3a3a3a;letter-spacing:1.4px">(gb.net)</div></div>
<div class="a" style="left:1350px;top:390px;width:14px;height:76px;background:linear-gradient(90deg,#cfcfcf,#e4e4e4 40%,#e9e9e9)"></div>
<svg style="left:1350px;top:390px" width="14" height="76"><path d="M3.500 9.500H10.500L7 4.500Z" fill="#bcbcbc"/><path d="M3.500 65.500H10.500L7 70.500Z" fill="#222"/><rect x="2.500" y="15.500" width="9" height="31" rx="4.500" fill="#e6e6e6" stroke="#a4a4a4"/></svg>
<div class="a" style="left:1141px;top:466px;width:209px;height:14px;background:linear-gradient(#cfcfcf,#e4e4e4 40%,#e9e9e9)"></div>
<div class="a" style="left:1350px;top:466px;width:14px;height:14px;background:#d6d6d6"></div>
<svg style="left:1141px;top:466px" width="208" height="14"><path d="M9.500 3.500V10.500L4.500 7Z" fill="#bcbcbc"/><path d="M199.500 3.500V10.500L204.500 7Z" fill="#222"/><rect x="15.500" y="2.500" width="118" height="9" rx="4.500" fill="#e6e6e6" stroke="#a4a4a4"/></svg>
<div class="ln" style="left:1141px;top:480px;width:223px;height:1px"></div>
<div class="ln" style="left:1186px;top:481px;width:1px;height:30px"></div>
<div class="ln" style="left:1186px;top:510px;width:178px;height:1px"></div>
<div class="t" style="left:1149px;top:487px">Form</div>
<div class="t" style="left:1195px;top:487px">View</div>
<div class="t" style="left:1237px;top:487px">Container</div>
<div class="a" style="left:1309px;top:487px;width:43px;height:16px;overflow:hidden"><div class="t" style="left:0;top:0">Network</div></div>
<div class="a" style="left:1352px;top:481px;width:12px;height:29px;background:#bfbfbf"></div>
<svg style="left:1354px;top:490px" width="8" height="10"><path d="M.5 .5V9.500L7.500 5Z" fill="#222"/></svg>
<!-- toolbox -->
<div class="a" style="left:1144px;top:514px;width:38px;height:38px;background:#bcbcbc;border:1px solid #9b9b9b;border-radius:4px"></div>
<svg style="left:1153px;top:518px" width="20" height="28"><path d="M2.200 1.300V22.500L7.800 19L10.500 25.500L13.300 24L10.800 18.500L18 16.300Z" fill="#444" stroke="#f0f0f0" stroke-width="1.100" stroke-linejoin="round"/></svg>
<div class="t" style="left:1193px;top:517px;font-size:24px;line-height:30px;height:30px;color:#111;width:20px;text-align:center">A</div>
<svg style="left:1227px;top:518px" width="32" height="30"><rect x=".5" y=".5" width="31" height="29" fill="#fff" stroke="#8a8a8a"/><rect x=".5" y=".5" width="4" height="29" fill="#8c8c8c"/><rect x="27.500" y=".5" width="4" height="29" fill="#8c8c8c"/><rect x="1.200" y="1.8" width="2.600" height="2.800" fill="#fff"/><rect x="28.200" y="1.8" width="2.600" height="2.800" fill="#fff"/><rect x="1.200" y="6.5" width="2.600" height="2.800" fill="#fff"/><rect x="28.200" y="6.5" width="2.600" height="2.800" fill="#fff"/><rect x="1.200" y="11.2" width="2.600" height="2.800" fill="#fff"/><rect x="28.200" y="11.2" width="2.600" height="2.800" fill="#fff"/><rect x="1.200" y="15.9" width="2.600" height="2.800" fill="#fff"/><rect x="28.200" y="15.9" width="2.600" height="2.800" fill="#fff"/><rect x="1.200" y="20.6" width="2.600" height="2.800" fill="#fff"/><rect x="28.200" y="20.6" width="2.600" height="2.800" fill="#fff"/><rect x="1.200" y="25.3" width="2.600" height="2.800" fill="#fff"/><rect x="28.200" y="25.3" width="2.600" height="2.800" fill="#fff"/><path d="M9.500 17Q8.500 11 14.500 9.500Q17.500 9 19 11Q19.500 8 22.500 7.500Q21.500 10 21.500 13Q21.500 20 15 21Q11.500 21 10 19L12.500 18.500Q10.500 18 9.500 17Z" fill="#2f7fd0"/><circle cx="14" cy="12.500" r="1.400" fill="#fff"/><path d="M12 16.500Q15 17.500 18 15.500" stroke="#fff" stroke-width=".9" fill="none"/></svg>
<svg style="left:1270px;top:521px" width="27" height="25" fill="none" stroke="#9a9a9a"><rect x="2" y="1.500" width="23" height="20" stroke-width="1.600"/><path d="M0 21.500H27" stroke-width="1.600"/><path d="M3 19L10 11L14 15.500L17.500 12L24 19" stroke-width="1.800"/><circle cx="7.500" cy="6.500" r="1.800" fill="#9a9a9a" stroke="none"/></svg>
<svg style="left:1314px;top:524px" width="18" height="18"><circle cx="9" cy="9" r="7.400" fill="#fff" stroke="#9f9f9f" stroke-width="1.200"/><circle cx="9" cy="9" r="4.800" fill="#6aa6f7"/></svg>
<!-- row2 -->
<svg style="left:1147px;top:567px" width="32" height="12"><rect x="7" y="2.500" width="18" height="7" rx="2" fill="#c3c3c3"/><rect x="17" y="2.500" width="5" height="7" fill="#d9d9d9"/><path d="M5 2.500L1.500 6L5 9.500M27 2.500L30.500 6L27 9.500" fill="none" stroke="#222" stroke-width="1.500"/></svg>
<div class="a" style="left:1202px;top:559px;width:1px;height:28px;background:#8a8a8a"></div>
<svg style="left:1227px;top:566px" width="32" height="14"><rect x="0" y="5" width="32" height="4" rx="2" fill="#c6c6c6"/><rect x="0" y="5" width="10" height="4" rx="2" fill="#6aa6f7"/><circle cx="11" cy="7" r="4.600" fill="#f2f2f2" stroke="#8f8f8f" stroke-width="1.200"/></svg>
<div class="a" style="left:1267px;top:563px;width:32px;height:20px;background:#fff;border:1px solid #9a9a9a;border-radius:2px"></div>
<svg style="left:1288px;top:566px" width="8" height="14" fill="none" stroke="#222" stroke-width="1.200"><path d="M1 5L4 2L7 5M1 9L4 12L7 9"/></svg>
<div class="a" style="left:1307px;top:557px;width:32px;height:32px;background:#fff;border:1px solid #9a9a9a;border-radius:2px"></div>
<div class="t" style="left:1311px;top:557px;font-size:11px;color:#111">abc</div>
<div class="a" style="left:1334px;top:560px;width:2px;height:26px;background:#b9b9b9"></div>
<!-- row3 -->
<div class="a" style="left:1147px;top:603px;width:32px;height:20px;background:#fff;border:1px solid #9a9a9a;border-radius:2px"></div>
<div class="t" style="left:1152px;top:605px;font-size:11px;color:#111">abc</div>
<div class="t" style="left:1193px;top:590px;font-family:'Liberation Serif',serif;font-style:italic;font-size:33px;line-height:40px;height:40px;color:#111;-webkit-text-stroke:.35px #111">a</div>
<div class="a" style="left:1233px;top:603px;width:20px;height:20px;background:linear-gradient(#e4e4e4,#eeeeee 55%,#ffffff);border:1px solid #a4a4a4;border-radius:2px"></div>
<div class="a" style="left:1273px;top:603px;width:20px;height:20px;background:linear-gradient(#efefef,#dcdcdc);border:1px solid #8f8f8f;border-radius:2px"></div>
<svg style="left:1275px;top:605px" width="16" height="16"><path d="M2 10Q1 4 7 2.500Q10 2 11.500 4Q12 1 15 .5Q14 3 14 6Q14 13 7.500 14Q4 14 2.500 12L5 11.500Q3 11 2 10Z" fill="#2f7fd0"/><circle cx="8.500" cy="6" r="1.300" fill="#fff"/></svg>
<div class="a" style="left:1307px;top:603px;width:32px;height:20px;background:linear-gradient(#f2f2f2,#dcdcdc);border:1px solid #9a9a9a;border-radius:2px"></div>
<div class="t" style="left:1307px;width:32px;text-align:center;top:605px;font-size:11.500px;color:#111">OK</div>
<!-- row4 -->
<div class="a" style="left:1154px;top:644px;width:18px;height:18px;background:#fff;border:1px solid #8a8a8a;border-radius:2px"></div>
<svg style="left:1156px;top:647px" width="14" height="12"><path d="M2 6L5.500 9.500L12 2.500" fill="none" stroke="#111" stroke-width="1.600"/></svg>
<div class="a" style="left:1187px;top:643px;width:32px;height:20px;background:linear-gradient(#f6f6f6,#dedede);border:1px solid #9a9a9a;border-radius:2px"></div>
<svg style="left:1205px;top:649px" width="10" height="8"><path d="M1 1.500L5 5.500L9 1.500" fill="none" stroke="#111" stroke-width="1.500"/></svg>
<div class="a" style="left:1227px;top:648px;width:32px;height:10px;background:linear-gradient(90deg,#79aef5 0,#79aef5 70%,#fff 70%);border:1px solid #9a9a9a;border-radius:2px"></div>
<!-- popup menu 1 -->
<div class="a" style="left:46px;top:50px;width:290px;height:275px;overflow:hidden"><div class="a" style="left:20px;top:0;width:249px;height:253px;background:#f4f4f4;border:1px solid #a6a6a6;border-top-color:#cfcfcf;box-shadow:0 3px 8px rgba(0,0,0,.45),0 1px 5px rgba(0,0,0,.35)"></div></div>
<div class="a" style="left:67px;top:139px;width:246px;height:25px;background:linear-gradient(#83a167 0,#83a167 1px,#9ebb81 1px,#91ae74 24px,#7f9d63 24px)"></div>
<div class="mi" style="left:92px;top:54px"><u>K</u>ompilovat</div>
<div class="sc" style="left:203px;width:100px;top:54px">F7</div>
<div class="mi" style="left:92px;top:79px">Kompilov<u>a</u>t vše</div>
<div class="sc" style="left:203px;width:100px;top:79px">Alt+F7</div>
<div class="mi" style="left:92px;top:111px">Přeloži<u>t</u>...</div>
<div class="sc" style="left:203px;width:100px;top:111px">Ctrl+T</div>
<div class="mi w" style="left:92px;top:143px"><u>V</u>ytvořit</div>
<svg style="left:303px;top:148px" width="6" height="7"><path d="M.5 .5V6.500L5.500 3.500Z" fill="#dfe8d4"/></svg>
<div class="mi" style="left:92px;top:168px"><u>Z</u>áplata</div>
<svg style="left:303px;top:173px" width="6" height="7"><path d="M.5 .5V6.500L5.500 3.500Z" fill="#555"/></svg>
<div class="mi" style="left:92px;top:193px"><u>P</u>ublish...</div>
<div class="mi" style="left:92px;top:225px"><u>U</u>klidit</div>
<div class="mi" style="left:92px;top:250px"><u>O</u>bnovit</div>
<div class="mi" style="left:92px;top:282px">V<u>l</u>astnosti...</div>
<div class="sc" style="left:203px;width:100px;top:282px">Ctrl+P</div>
<div class="sep" style="left:67px;top:103px;width:246px"></div>
<div class="sep" style="left:67px;top:135px;width:246px"></div>
<div class="sep" style="left:67px;top:217px;width:246px"></div>
<div class="sep" style="left:67px;top:274px;width:246px"></div>
<svg style="left:70px;top:53px" width="18" height="18"><path transform="translate(.5,1)" d="M8 1.200L9.300 1.400L9.800 3.100L11.200 3.700L12.700 2.800L13.700 3.800L12.800 5.300L13.400 6.700L15 7.200V8.800L13.400 9.300L12.800 10.700L13.700 12.200L12.700 13.200L11.200 12.300L9.800 12.900L9.300 14.600H7.700L7.200 12.900L5.800 12.300L4.300 13.200L3.300 12.200L4.200 10.700L3.600 9.300L2 8.800V7.200L3.600 6.700L4.200 5.300L3.300 3.800L4.300 2.800L5.800 3.700L7.200 3.100L7.700 1.400Z" fill="#e2e2e2" stroke="#a2a2a2" stroke-width=".9"/><circle cx="9" cy="9" r="2.300" fill="#f4f4f4" stroke="#a2a2a2" stroke-width=".7"/><path d="M10 7.5H14V11.5H16.800L12 16.7L7.200 11.5H10Z" fill="#bcd838" stroke="#5f981d" stroke-width=".9" stroke-linejoin="round"/></svg>
<svg style="left:70px;top:78px" width="18" height="18"><path transform="translate(.5,1)" d="M8 1.200L9.300 1.400L9.800 3.100L11.200 3.700L12.700 2.800L13.700 3.800L12.800 5.300L13.400 6.700L15 7.200V8.800L13.400 9.300L12.800 10.700L13.700 12.200L12.700 13.200L11.200 12.300L9.800 12.900L9.300 14.600H7.700L7.200 12.900L5.800 12.300L4.300 13.200L3.300 12.200L4.200 10.700L3.600 9.300L2 8.800V7.200L3.600 6.700L4.200 5.300L3.300 3.800L4.300 2.800L5.800 3.700L7.200 3.100L7.700 1.400Z" fill="#e2e2e2" stroke="#a2a2a2" stroke-width=".9"/><circle cx="9" cy="9" r="2.300" fill="#f4f4f4" stroke="#a2a2a2" stroke-width=".7"/><path d="M10 2H14V5H16.800L12 10.2L7.200 5H10Z" fill="#bcd838" stroke="#5f981d" stroke-width=".9" stroke-linejoin="round"/><path d="M10 7.5H14V11.5H16.800L12 16.7L7.200 11.5H10Z" fill="#bcd838" stroke="#5f981d" stroke-width=".9" stroke-linejoin="round"/></svg>
<svg style="left:71px;top:111px" width="16" height="16"><rect x=".5" y=".5" width="15" height="15" rx="2" fill="#2c6bd6" stroke="#1d4fa8"/><rect x="1" y="1" width="14" height="6" rx="2" fill="#4b86e6"/><circle cx="8" cy="8" r="4.600" fill="none" stroke="#cfe0f8" stroke-width="1.100"/><circle cx="8" cy="8" r="2.300" fill="#cfe0f8" opacity=".85"/></svg>
<svg style="left:71px;top:193px" width="16" height="16"><rect x=".5" y=".5" width="15" height="15" rx="1.500" fill="#2f8fe0" stroke="#1f6fb8"/><path d="M1 15L10 3M6 15L9.500 3M1 8L14 5M3 2L15 11" stroke="#cfe8fb" stroke-width=".9" opacity=".9"/><circle cx="9.500" cy="4.500" r="2.200" fill="#fff" opacity=".9"/></svg>
<svg style="left:71px;top:226px" width="16" height="14"><path d="M.5 7L5 1.500H15.500V12.500H5Z" fill="#333"/><path d="M7.500 4.500L12.500 9.500M12.500 4.500L7.500 9.500" stroke="#f4f4f4" stroke-width="1.800"/></svg>
<svg style="left:71px;top:250px" width="16" height="16" fill="none" stroke="#333" stroke-width="1.500"><path d="M4 8A4.800 4.800 0 1 1 8.500 13"/><path d="M1 5L4.200 9L7 5.200" fill="#333" stroke="none"/></svg>
<svg style="left:70px;top:281px" width="18" height="18"><rect x="1.500" y="2.500" width="14" height="14" rx="1.500" fill="#efefef" stroke="#8e8e8e"/><path d="M1.500 4.500H15.500" stroke="#a9a9a9" stroke-width="2"/><path d="M4 7H12M4 9H12M4 11H12M4 13H12M4 15H9" stroke="#7f93c4" stroke-width=".8"/><path d="M12.500 3L14.500 4L10 14L8.500 15L8.500 13Z" fill="#f08a1c" stroke="#b3570a" stroke-width=".5"/><path d="M12.500 3L13.200 1.500L15.200 2.500L14.500 4Z" fill="#e33"/></svg>
<!-- submenu -->
<div class="a" style="left:313px;top:139px;width:291px;height:75px;background:#f4f4f4;border:1px solid #a6a6a6;border-top-color:#cfcfcf;box-shadow:0 3px 8px rgba(0,0,0,.45),0 1px 5px rgba(0,0,0,.35)"></div>
<div class="a" style="left:314px;top:139px;width:289px;height:25px;background:linear-gradient(#83a167 0,#83a167 1px,#9ebb81 1px,#91ae74 24px,#7f9d63 24px)"></div>
<div class="mi w" style="left:339px;top:143px"><u>S</u>pustitelný...</div>
<div class="sc w" style="left:492px;width:100px;top:143px">Ctrl+Alt+X</div>
<div class="mi" style="left:339px;top:168px"><u>Z</u>drojový archiv...</div>
<div class="sc" style="left:492px;width:100px;top:168px">Ctrl+Alt+A</div>
<div class="mi" style="left:339px;top:193px"><u>I</u>nstalační balíček...</div>
<div class="sc" style="left:492px;width:100px;top:193px">Ctrl+Alt+I</div>
<svg style="left:319px;top:144px" width="14" height="14"><path d="M7 .5L8.300 .7L8.700 2.400L10 3L11.500 2.100L12.500 3.100L11.600 4.600L12.200 5.900L13.800 6.300V7.700L12.200 8.100L11.600 9.400L12.500 10.900L11.500 11.900L10 11L8.700 11.600L8.300 13.300H6.700L6.300 11.600L5 11L3.500 11.900L2.500 10.900L3.400 9.400L2.800 8.100L1.200 7.700V6.300L2.800 5.900L3.400 4.600L2.500 3.100L3.500 2.100L5 3L6.300 2.400L6.700 .7Z" fill="#2e2e2e"/><circle cx="7.500" cy="7" r="2.200" fill="#93af77"/></svg>
<svg style="left:318px;top:168px" width="16" height="16"><rect x=".5" y=".5" width="15" height="15" rx="2" fill="#ad774a" stroke="#86582f"/><rect x="1" y="1" width="14" height="7" rx="1.500" fill="#c9a27a"/><rect x="6" y="1" width="4" height="9.500" fill="#dcc5a6"/><path d="M1 8.300H6M10 8.300H15" stroke="#94633a" stroke-width=".8"/></svg>
<svg style="left:318px;top:193px" width="16" height="16"><rect x=".5" y=".5" width="15" height="15" rx="2" fill="#ad774a" stroke="#86582f"/><rect x="1" y="1" width="14" height="7" rx="1.500" fill="#c9a27a"/><rect x="6" y="1" width="4" height="9.500" fill="#dcc5a6"/><path d="M1 8.300H6M10 8.300H15" stroke="#94633a" stroke-width=".8"/><path d="M9.300 7.200H12.700V10.500H15L11 15L7 10.500H9.300Z" fill="#7ccc3c" stroke="#3f8f14" stroke-width=".7"/></svg>
<!-- cursor -->
<svg style="left:528px;top:153px" width="18" height="24"><path d="M2.500 2.300V19.800L6.400 16.200L8.900 21.600L11.300 20.500L8.800 15.200L14 14.600Z" fill="#fff" stroke="#111" stroke-width="1.300" stroke-linejoin="round"/></svg>
<!-- taskbar -->
<div class="a" style="left:0;top:740px;width:1366px;height:28px;background:linear-gradient(#4c4c4c 0,#3f3f3f 2px,#3b3b3b 11px,#303030 14px,#2b2b2b 28px)"></div>
<div class="a" style="left:0;top:739px;width:1366px;height:1px;background:#7c7c7c"></div>
<svg style="left:3px;top:743px" width="23" height="22"><path d="M2 2.500H15Q21.500 2.500 21.500 9V14Q21.500 20 15 20H11Q5 20 5 14V6Q5 5 4 5H2Z" fill="#f2f2f2"/><path d="M7 6H15Q19 6 19 10V14Q19 17.500 15 17.500H11Q7.500 17.500 7.500 14Z" fill="#8bb158"/><path d="M9.500 9V13.200Q9.500 15 11.300 15H14.700Q16.500 15 16.500 13.200V10.500M13 10.500V14.500" fill="none" stroke="#fff" stroke-width="1.400"/></svg>
<svg style="left:35px;top:745px" width="22" height="18"><rect x="0" y="0" width="22" height="3" fill="#ececec"/><rect x="0" y="3" width="22" height="14" fill="#86ad52"/><rect x="0" y="3" width="22" height="5" fill="#9cc266"/><rect x="5" y="12" width="12" height="5" fill="#55752f"/></svg>
<svg style="left:69px;top:746px" width="19" height="18"><rect x=".7" y=".7" width="17.600" height="16.600" rx="1.500" fill="#1c1c1c" stroke="#cfcfcf" stroke-width="1.400"/><path d="M4.500 6.500L7.500 8.500L4.500 10.500M8.500 11.500H12" stroke="#eee" stroke-width="1.100" fill="none"/></svg>
<svg style="left:93px;top:746px" width="18" height="18"><rect x=".5" y=".5" width="17" height="17" rx="1.500" fill="#e2e2e2" stroke="#a9a9a9"/><rect x="1.500" y="12" width="15" height="4.500" fill="#c9c9c9"/><path d="M6 4L12 10" stroke="#6d6d6d" stroke-width="2"/><circle cx="6" cy="4.500" r="1.800" fill="#888"/><path d="M3 14.500H8" stroke="#e08a2a" stroke-width="1"/></svg>
<svg style="left:116px;top:747px" width="20" height="16"><rect x=".5" y="2.500" width="19" height="12.500" rx="1.500" fill="#d9d9d9" stroke="#9a9a9a"/><rect x="3" y=".8" width="5" height="2.500" fill="#bdbdbd"/><circle cx="12" cy="9" r="4.600" fill="#5a5a5a" stroke="#efefef" stroke-width="1.200"/><circle cx="12" cy="9" r="2" fill="#222"/></svg>
<svg style="left:141px;top:746px" width="18" height="18"><rect x="0" y="0" width="18" height="18" rx="1.500" fill="#d9261c"/><path d="M2.500 2Q9.500 9 2.500 16M15.500 2Q8.500 9 15.500 16" fill="none" stroke="#fff" stroke-width="2.600"/></svg>
<div class="a" style="left:167px;top:742px;width:161px;height:26px;background:linear-gradient(#3a3a3a,#2f2f2f);border:1px solid #2a2a2a;border-bottom:0;border-radius:4px 4px 0 0"></div>
<svg style="left:172px;top:746px" width="15" height="15" viewBox="0 0 18 18"><rect x="0" y="0" width="18" height="18" rx="1.500" fill="#d9261c"/><path d="M2.500 2Q9.500 9 2.500 16M15.500 2Q8.500 9 15.500 16" fill="none" stroke="#fff" stroke-width="2.600"/></svg>
<div class="t w" style="left:190px;top:745px;color:#f0f0f0">[Double Commander]</div>
<div class="a" style="left:331px;top:742px;width:160px;height:26px;background:linear-gradient(#5e5e5e,#4a4a4a 60%,#454545);border:1px solid #2a2a2a;border-bottom:0;border-radius:4px 4px 0 0"></div>
<svg style="left:334px;top:746px" width="14" height="15"><path d="M1.500 9.500Q.5 4.500 5.500 3Q8 2.500 9.500 4.500Q10 2 12.500 1.500Q12 3.500 12 6Q12 11.500 6.500 12.500Q3.500 12.500 2 10.800L4 10.500Q2.300 10 1.500 9.500Z" fill="#3f8fdd" stroke="#2a5f9a" stroke-width=".6"/><path d="M2 2.500L5 4.500M1 5L4 6" stroke="#8cb8e8" stroke-width=".8"/><path d="M4 13.500Q7 14.500 10 13" stroke="#2a5f9a" stroke-width=".8" fill="none"/></svg>
<div class="t w" style="left:353px;top:745px;color:#f4f4f4">FrmMain.form - Serv...</div>
<svg style="left:1228px;top:745px" width="18" height="19"><path d="M9 .8Q12 3 16.500 3Q17 12 9 18Q1 12 1.500 3Q6 3 9 .8Z" fill="#e9e9e9" stroke="#bdbdbd" stroke-width=".6"/><circle cx="9" cy="8.500" r="4.300" fill="#2f6fd0"/><rect x="8.300" y="6" width="1.500" height="5" fill="#fff"/></svg>
<svg style="left:1251px;top:746px" width="16" height="16" fill="#d4d4d4"><circle cx="8" cy="4.800" r="3.700"/><path d="M1 15Q1 10.500 6 9.800H10Q15 10.500 15 15Z"/></svg>
<svg style="left:1271px;top:747px" width="16" height="14" fill="none" stroke="#d4d4d4" stroke-width="1.600"><path d="M1 5Q8 -1.500 15 5" opacity=".55"/><path d="M3.300 7.500Q8 3 12.700 7.500"/><path d="M5.600 10Q8 7.800 10.400 10"/><circle cx="8" cy="12.300" r="1.100" fill="#d4d4d4" stroke="none"/></svg>
<svg style="left:1291px;top:746px" width="16" height="17"><rect x="2" y="2.500" width="8" height="12.500" rx="1" fill="#9a9a9a" stroke="#cfcfcf" stroke-width="1.200"/><rect x="4.500" y=".8" width="3" height="2" fill="#cfcfcf"/><path d="M9 6V15.500L11.200 13.500L12.700 16.500L14 15.800L12.600 13H15Z" fill="#fff" stroke="#333" stroke-width=".6"/></svg>
<div class="t b" style="left:1312px;top:746px;color:#d9e6f7;font-size:12px;text-shadow:0 0 1px #c96">17:03</div>
<svg style="left:1347px;top:746px" width="18" height="16"><path d="M1 5.500H4L8 2V14L4 10.500H1Z" fill="#8a8a8a"/><path d="M10 5Q12 8 10 11M12 3Q15.500 8 12 13M14 1.500Q18.500 8 14 14.500" fill="none" stroke="#777" stroke-width="1.300"/></svg>
</body></html>
